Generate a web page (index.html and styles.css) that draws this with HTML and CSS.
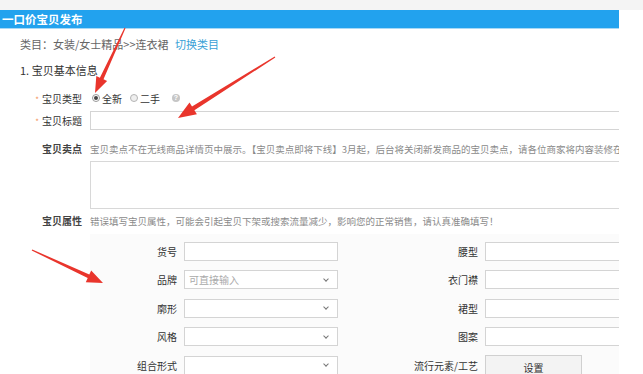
FILE: index.html
```html
<!DOCTYPE html>
<html lang="zh-CN">
<head>
<meta charset="utf-8">
<title>一口价宝贝发布</title>
<link rel="stylesheet" href="styles.css">
</head>
<body>
<div class="strip"></div>
<div class="main">
  <div class="hd">一口价宝贝发布</div>
  <div class="cat">类目：女装/女士精品&gt;&gt;连衣裙 <span class="link">切换类目</span></div>
  <div class="sec">1. 宝贝基本信息</div>
  <div class="form">
    <div class="row row-type">
      <div class="lbl"><span class="star">*</span>宝贝类型</div>
      <div class="radios">
        <span class="radio on"></span><span class="rtxt">全新</span>
        <span class="radio"></span><span class="rtxt last">二手</span>
        <span class="qmark">?</span>
      </div>
    </div>
    <div class="row row-title">
      <div class="lbl"><span class="star">*</span>宝贝标题</div>
      <div class="input wide"></div>
    </div>
    <div class="row row-sell">
      <div class="lbl strong">宝贝卖点</div>
      <div class="ctl">
        <div class="hint">宝贝卖点不在无线商品详情页中展示。【宝贝卖点即将下线】3月起，后台将关闭新发商品的宝贝卖点，请各位商家将内容装修在宝贝详情中。</div>
        <div class="textarea"></div>
      </div>
    </div>
    <div class="row row-attr">
      <div class="lbl strong">宝贝属性</div>
      <div class="ctl">
        <div class="hint">错误填写宝贝属性，可能会引起宝贝下架或搜索流量减少，影响您的正常销售，请认真准确填写！</div>
        <div class="panel">
          <div class="alb">货号</div><div class="input"></div>
          <div class="alb">腰型</div><div class="input"></div>
          <div class="alb">品牌</div><div class="input sel"><span class="ph">可直接输入</span><span class="chev"></span></div>
          <div class="alb">衣门襟</div><div class="input"></div>
          <div class="alb">廓形</div><div class="input sel"><span class="chev"></span></div>
          <div class="alb">裙型</div><div class="input"></div>
          <div class="alb">风格</div><div class="input sel"><span class="chev"></span></div>
          <div class="alb">图案</div><div class="input"></div>
          <div class="alb">组合形式</div><div class="input sel"><span class="chev"></span></div>
          <div class="alb">流行元素/工艺</div><div class="btn">设置</div>
        </div>
      </div>
    </div>
  </div>
</div>
<svg class="arrows" width="643" height="374" viewBox="0 0 643 374" xmlns="http://www.w3.org/2000/svg">
  <polygon fill="#e9352c" points="124.5,27.8 99.9,77.7 96.3,76.0 95,93 107.1,81.0 103.5,79.3 125.5,28.2"/>
  <polygon fill="#e9352c" points="274.7,56.5 192.0,106.5 189.5,102.5 178,118 196.9,114.3 194.4,110.3 275.3,57.5"/>
  <polygon fill="#e9352c" points="31.7,250.5 87.7,278.1 85.8,282.2 103,283 91.2,270.4 89.3,274.5 32.3,249.5"/>
</svg>
</body>
</html>
```

FILE: styles.css
```css
html, body {
  margin: 0;
  padding: 0;
  background: #fff;
}
body {
  font-family: "Noto Sans CJK SC", "Noto Sans", sans-serif;
  color: #333;
  width: 643px;
  height: 374px;
  overflow: hidden;
  position: relative;
}
.strip {
  height: 10px;
  background: #f4f4f4;
}
.main {
  width: 619px;
  height: 364px;
  overflow: hidden;
}
.hd {
  height: 18px;
  line-height: 18px;
  background: #22a2ee;
  color: #fff;
  font-size: 11.5px;
  font-weight: bold;
  padding-left: 2px;
  border-bottom: 1px solid #a8d9f6;
}
.cat {
  margin-top: 5px;
  height: 20px;
  line-height: 20px;
  padding-left: 20px;
  font-size: 11px;
  color: #666;
}
.link {
  color: #3a9fd6;
  margin-left: 4px;
}
.sec {
  margin-top: 6px;
  height: 20px;
  line-height: 20px;
  padding-left: 20px;
  font-size: 11px;
  color: #333;
}
.form {
  padding-top: 8px;
}
.row {
  display: grid;
  grid-template-columns: 82px 1fr;
  column-gap: 8px;
}
.lbl {
  text-align: right;
  font-size: 10px;
  color: #333;
  white-space: nowrap;
}
.lbl.strong {
  font-weight: bold;
  color: #444;
}
.star {
  color: #f4925a;
  font-size: 8px;
  margin-right: 3px;
}
.row-type {
  height: 20px;
  align-items: center;
}
.radios {
  display: flex;
  align-items: center;
  font-size: 10px;
  color: #333;
}
.radio {
  width: 6px;
  height: 6px;
  border: 1px solid #b4b4b4;
  border-radius: 50%;
  background: #efefef;
  display: inline-flex;
  align-items: center;
  justify-content: center;
}
.radio:first-child {
  margin-left: 2px;
}
.radio.on {
  background: #fff;
  border-color: #999;
}
.radio.on::after {
  content: "";
  width: 4px;
  height: 4px;
  border-radius: 50%;
  background: #444;
}
.rtxt {
  margin-left: 2px;
  margin-right: 8px;
}
.rtxt.last {
  margin-right: 12px;
}
.qmark {
  width: 8px;
  height: 8px;
  border-radius: 50%;
  background: #c6c6c6;
  color: #fff;
  font-size: 7px;
  line-height: 8px;
  text-align: center;
  font-family: "Liberation Sans", sans-serif;
  font-weight: bold;
}
.row-title {
  margin-top: 3px;
  align-items: center;
}
.input {
  height: 17px;
  border: 1px solid #d4d4d4;
  background: #fff;
  box-sizing: content-box;
}
.input.wide {
  width: 600px;
}
.row-sell {
  margin-top: 11px;
}
.row-sell .lbl,
.row-attr .lbl {
  line-height: 16px;
}
.ctl {
  min-width: 0;
}
.hint {
  font-size: 9.5px;
  line-height: 16px;
  color: #8a8a8a;
  white-space: nowrap;
  overflow: hidden;
}
.textarea {
  margin-top: 4px;
  height: 46px;
  width: 600px;
  border: 1px solid #d8d8d8;
  background: #fff;
}
.row-attr {
  margin-top: 4px;
}
.panel {
  margin-top: 5px;
  background: #fbfbfb;
  width: 600px;
  height: 200px;
  padding-top: 7px;
  display: grid;
  grid-template-columns: 87px 154px 133px 154px;
  grid-auto-rows: 20px;
  align-content: start;
  column-gap: 7px;
  row-gap: 8.5px;
  align-items: center;
}
.alb {
  text-align: right;
  font-size: 10px;
  color: #333;
  white-space: nowrap;
}
.sel {
  display: flex;
  align-items: center;
}
.ph {
  font-size: 10px;
  color: #aaa;
  padding-left: 4px;
}
.chev {
  width: 3px;
  height: 3px;
  border-right: 1px solid #777;
  border-bottom: 1px solid #777;
  transform: rotate(45deg);
  margin-left: auto;
  margin-right: 9px;
  margin-top: -2px;
}
.btn {
  width: 95px;
  height: 22px;
  border: 1px solid #d0d0d0;
  background: #f3f3f3;
  font-size: 10px;
  color: #333;
  text-align: center;
  line-height: 24px;
  align-self: start;
}
.arrows {
  position: absolute;
  left: 0;
  top: 0;
  pointer-events: none;
}
```
